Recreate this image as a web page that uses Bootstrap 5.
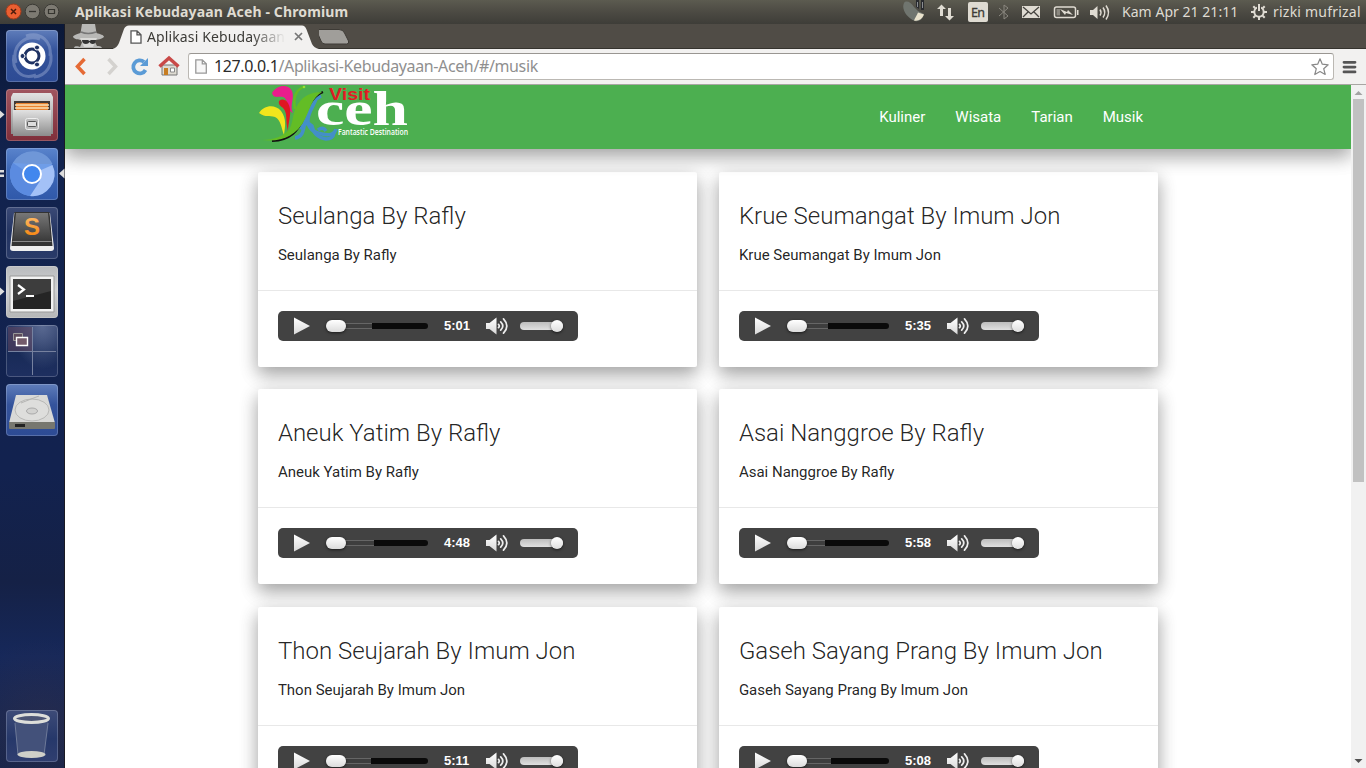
<!DOCTYPE html>
<html lang="id">
<head>
<meta charset="utf-8">
<meta name="viewport" content="width=device-width, initial-scale=1">
<title>Aplikasi Kebudayaan Aceh</title>
<link href="https://cdn.jsdelivr.net/npm/bootstrap@5.3.0/dist/css/bootstrap.min.css" rel="stylesheet">
<style>
  body { height: 100vh; overflow: hidden; font-family: Roboto, "Noto Sans", sans-serif; font-size: 15px; color: rgba(0,0,0,.87); }
  svg { display: block; flex: none; }
  .ui-font { font-family: "Noto Sans", "Open Sans", sans-serif; white-space: nowrap; }

  /* desktop panel */
  .panel { height: 24px; background: linear-gradient(#5c5b50, #4c4a43 50%, #3e3d38); color: #dfdbd2; font-size: 14px; line-height: 24px; }
  .win-title { font-weight: 700; margin-left: 15px; letter-spacing: .13px; }
  .clock { width: 129px; letter-spacing: .04px; }
  .user-name { width: 93px; margin-left: 6px; letter-spacing: .22px; }

  /* launcher */
  .launcher { width: 65px; padding: 6px 0 6px 6px; gap: 7px; background: radial-gradient(circle at 42px 705px, rgba(90,60,60,.25), transparent 90px), linear-gradient(#0b1838, #12234e 18%, #12224f 60%, #152146 75%, #16285a 85%, #14244c); border-right: 1px solid #1a1a24; }
  .tile { width: 52px; height: 52px; border-radius: 4px; box-shadow: inset 0 0 0 1px rgba(255,255,255,.2); flex: none; background: linear-gradient(#5f7dba, #34539b 40%, #2d4b94); }
  .tile-files { background: linear-gradient(#a0555f, #7f2e3a); }
  .tile-chrome { background: linear-gradient(#5a84cc, #3e69b8 40%, #3059aa); }
  .tile-sublime { background: linear-gradient(#3b4a76, #233462 50%, #2a3b69); }
  .tile-term { background: linear-gradient(#b8babd, #d0d1d2 45%, #b5b6b7); }
  .tile-work { background: radial-gradient(ellipse at 70% 0, #5a6a92, transparent 60%), linear-gradient(#2a3a68, #182a57 50%, #1e2f60); }
  .tile-trash { background: linear-gradient(#3d4b78, #26386a 55%, #303f70); }
  .pip { left: 0; top: 21px; }
  .pip-right { left: 59px; top: 20px; }
  .tile-wrap { margin-left: -6px; padding-left: 6px; width: 65px; }

  /* browser */
  .tabstrip { height: 25px; background: #504c46; border-bottom: 1px solid #35332e; }
  .tab { width: 206px; height: 25px; margin-left: 4px; padding-left: 17px; z-index: 1; }
  .tab-shape { left: 0; top: 1px; z-index: -1; }
  .tab-label { width: 140px; margin-left: 5px; font-size: 14px; letter-spacing: .12px; color: #3c3b37; line-height: 25px; -webkit-mask-image: linear-gradient(90deg, #000 75%, transparent 99%); mask-image: linear-gradient(90deg, #000 75%, transparent 99%); }
  .toolbar { height: 36px; background: #f2f1f0; border-bottom: 1px solid #a8a6a3; }
  .url-box { height: 27px; border: 1px solid #bbb8b3; border-top-color: #999692; border-radius: 3px; background: #fff; margin-left: 7px; padding-left: 6px; font-size: 16px; color: #8f8f8f; line-height: 25px; }
  .url-box b { font-weight: 400; color: #2b2b2b; }
  .url-text { letter-spacing: -.37px; margin-left: -1px; }

  /* page */
  .lift { box-shadow: 0 8px 17px 0 rgba(0,0,0,.22), 0 6px 20px 0 rgba(0,0,0,.19); }
  .site-nav { height: 64px; background: #4caf50; padding: 0; z-index: 1; }
  .page-wrap { width: 70%; margin: 0 auto; }
  .site-nav .nav-link { padding: 0 15px; line-height: 64px; color: #fff; }
  .song-grid { display: grid; grid-template-columns: 439px 439px; column-gap: 22px; row-gap: 22.4px; padding-top: 22.9px; }
  .song { height: 195px; background: #fff; border-radius: 2px; }
  .song-head { height: 118px; padding: 20px 20px 0; }
  .song-title { font-size: 24px; font-weight: 300; line-height: 48px; margin-bottom: 4px; }
  .song-foot { border-top: 1px solid #e8e8e8; padding: 20px; }
  .player { width: 300px; height: 30px; border-radius: 5px; background: #424242; padding-left: 15px; }
  .seek { width: 102px; height: 6px; border-radius: 3px; background: #0a0a0a; margin-left: 15px; }
  .seek-buffer { height: 6px; border-radius: 3px 0 0 3px; background: linear-gradient(#666 0 1px, #3e3e3e 1px 5px, #666 5px); }
  .seek-knob { left: 0; top: -3px; width: 20px; height: 12px; border-radius: 6px; background: linear-gradient(#fff, #dcdcdc); box-shadow: 0 1px 3px rgba(0,0,0,.6); }
  .play-time { width: 42px; padding-left: 16px; font: 700 13px/30px "Liberation Sans", sans-serif; color: #fff; }
  .volume { width: 43px; height: 8px; border-radius: 4px; background: linear-gradient(#bdbdbd, #e0e0e0); margin-left: 11px; }
  .volume-knob { right: 0; top: -2px; width: 12px; height: 12px; border-radius: 50%; background: linear-gradient(#fff, #dedede); box-shadow: 0 1px 3px rgba(0,0,0,.6); }
  .scroll-col { width: 15px; background: #f1f1f1; z-index: 2; }
  .scroll-thumb { width: 11px; height: 383px; margin: 14px auto 0 2px; background: #c1c1c1; }
</style>
</head>
<body class="d-flex flex-column">

<svg width="0" height="0" class="position-absolute">
  <defs>
    <linearGradient id="white-fade" x1="0" y1="0" x2="0" y2="1"><stop stop-color="#fff"/><stop offset="1" stop-color="#d8d8d8"/></linearGradient>
    <linearGradient id="steel" x1="0" y1="0" x2="0" y2="1"><stop stop-color="#e2e2e2"/><stop offset="1" stop-color="#8c8c8c"/></linearGradient>
    <linearGradient id="dark-key" x1="0" y1="0" x2="0" y2="1"><stop stop-color="#777"/><stop offset="1" stop-color="#3a3a3a"/></linearGradient>
    <linearGradient id="ember" x1="0" y1="0" x2="0" y2="1"><stop stop-color="#ffc477"/><stop offset="1" stop-color="#f57c00"/></linearGradient>
    <symbol id="ic-play" viewBox="0 0 18 20"><path d="M1 1.500 17 10 1 18.500Z" fill="url(#white-fade)"/></symbol>
    <symbol id="ic-sound" viewBox="0 0 23 18"><path d="M0 6h3.500L10.500 .5v17L3.500 12H0Z" fill="url(#white-fade)"/><path d="M12.500 7.300q1.600 1.700 0 3.400M14.700 4.800q4.200 4.200 0 8.400M17.500 1.800q6.700 7.200 0 14.400" fill="none" stroke="#eee" stroke-width="1.700" stroke-linecap="round"/></symbol>
  </defs>
</svg>

<header class="panel ui-font d-flex align-items-center flex-shrink-0">
  <svg width="60" height="24" viewBox="0 0 60 24">
    <circle cx="13.500" cy="11.500" r="7.500" fill="#ea5f31" stroke="#a63c1b"/><path d="m11 9 5 5m0-5-5 5" stroke="#4c1c0c" stroke-width="1.500"/>
    <circle cx="32.500" cy="11.500" r="7.300" fill="#7d7a72" stroke="#3b3a35"/><path d="M29 11.500h7" stroke="#35342f" stroke-width="1.300"/>
    <circle cx="51.500" cy="11.500" r="7.300" fill="#7d7a72" stroke="#3b3a35"/><path d="M48.500 9.500h6v4h-6z" fill="none" stroke="#35342f" stroke-width="1.200"/>
  </svg>
  <span class="win-title">Aplikasi Kebudayaan Aceh - Chromium</span>
  <svg class="ms-auto" width="219" height="24" viewBox="0 0 219 24">
    <path d="M1 3C3 0 8 2 11 7l4 4 6 3c-1 5-5 8-9 7C4 18-2 9 1 3Z" fill="#70756f"/><path d="M11 20.500c4 1 8-1 10-6l-6-2c-1 3-3 5-4 8Z" fill="#e9e2cc"/><path d="M13 0h3v9l-3-2ZM18 0h3v10h-3Z" fill="#292b2f"/><path d="M14.500 2v5M19.500 2v6" stroke="#8a8d92"/>
    <g fill="#dfdbd2"><path d="M38.500 4.500 34 9h3v7h3V9h3ZM46.500 20.500 42 16h3V8h3v8h3Z"/><rect x="65" y="2" width="20" height="20" rx="2"/></g>
    <text x="68" y="17" font-size="12.500" fill="#3c3b37" stroke="#3c3b37" stroke-width=".3" textLength="14">En</text>
    <path d="m96 8 9 8-4 3V5l4 3-9 8" fill="none" stroke="#8b8880"/>
    <rect x="119" y="6" width="18" height="12" fill="#dfdbd2"/><path d="m120 7 8 7 8-7m-16 10 5-5m11 5-5-5" fill="none" stroke="#45433e" stroke-width="1.300"/>
    <rect x="151.500" y="7" width="21" height="10.500" rx="2" fill="none" stroke="#dfdbd2" stroke-width="1.500"/><path d="M174 10h1.500v5H174Z" fill="#dfdbd2"/><path d="M153.500 9H157v6.500h-3.500z" fill="#8b8880"/><path d="m157 9 7 3 1-2 5 5-7-2-1 2Z" fill="#dfdbd2"/>
    <path d="M187 10h3l4.500-4v13l-4.500-4h-3Z" fill="#dfdbd2"/><path d="M197 9.500q2 3 0 6M200 7.500q3.500 5 0 10M203 5.500q5 7 0 14" fill="none" stroke="#dfdbd2" stroke-width="1.500"/>
  </svg>
  <span class="clock ms-0">Kam Apr 21 21:11</span>
  <svg width="16" height="16" viewBox="0 0 16 16"><circle cx="8" cy="8" r="4.700" fill="none" stroke="#dfdbd2" stroke-width="2"/><path d="M8 0v7M8 13v3M0 8h3m10 0h3M2.300 2.300l2 2m7.400 7.400 2 2M2.300 13.700l2-2m7.400-7.400 2-2" stroke="#dfdbd2" stroke-width="2"/><path d="M6 1h1v6H6zM9 1h1v6H9z" fill="#4a4842"/></svg>
  <span class="user-name">rizki mufrizal</span>
</header>

<div class="d-flex flex-grow-1" style="min-height:0">
  <aside class="launcher d-flex flex-column flex-shrink-0">
    <svg class="tile" viewBox="0 0 52 52">
      <g fill="none" stroke="#a9badd" stroke-opacity=".4" stroke-width="3"><path d="M10 33C5 15 20 4 34 9M44 21c4 14-4 25-16 26M20 6c15-5 26 6 24 20M30 45C16 50 5 40 8 25"/></g>
      <circle cx="26" cy="26" r="13.500" fill="#fff"/><circle cx="26" cy="26" r="7" fill="none" stroke="#1f3263" stroke-width="3"/>
      <g fill="#1f3263" stroke="#fff" stroke-width="1"><circle cx="16.500" cy="26" r="2.500"/><circle cx="31" cy="17.500" r="2.500"/><circle cx="31" cy="34.500" r="2.500"/></g>
    </svg>
    <div class="tile-wrap position-relative">
      <svg class="pip position-absolute" width="5" height="9"><path d="M0 .5 4.500 4.500 0 8.500Z" fill="#ddd"/></svg>
      <svg class="tile tile-files" viewBox="0 0 52 52"><path d="M7 4h38l2 4v37H5V8Z" fill="url(#steel)"/><path d="M8 12h36v11H8z" fill="#433a35"/><path d="M10 14h32v8H10z" fill="#e8822f"/><path d="M9 16h34M9 19h34" stroke="#f9e2b8" stroke-width="1.300"/><path d="M7 21h38v26H7z" fill="url(#steel)"/><rect x="19.500" y="29.500" width="13" height="11" rx="2" fill="#bbb" stroke="#eee"/><rect x="21.500" y="32.500" width="9" height="5" rx="1" fill="#ddd" stroke="#555"/></svg>
    </div>
    <div class="tile-wrap position-relative">
      <svg class="pip position-absolute" width="5" height="9"><path d="M0 1h4v2.500H0zM0 5.500h4V8H0z" fill="#ddd"/></svg>
      <svg class="tile tile-chrome" viewBox="0 0 52 52"><circle cx="26" cy="26" r="22" fill="#6f9de8"/><path d="M26 26 46.500 17A22 22 0 0 1 24 48Z" fill="#a3c1f7"/><path d="M7 15A22 22 0 0 0 24 48l10-15Z" fill="#5b8be0"/><path d="M7 15A22 22 0 0 1 46.500 16H26Z" fill="#6f97d8"/><circle cx="26" cy="26" r="9" fill="#4287ee" stroke="#fff" stroke-width="2"/></svg>
      <svg class="pip-right position-absolute" width="6" height="11"><path d="M5.500 .5 0 5.500l5.500 5Z" fill="#ddd"/></svg>
    </div>
    <svg class="tile tile-sublime" viewBox="0 0 52 52"><path d="M8 6h36l4 35q0 3-3 3H7q-3 0-3-3Z" fill="#eee"/><path d="M8.500 5h35l3 34H5.500Z" fill="#333"/><path d="M10 6h32l3 28H7Z" fill="url(#dark-key)"/><path d="M6.500 34.500h39" stroke="#888"/><text x="26" y="28" text-anchor="middle" font-family="Liberation Sans, sans-serif" font-size="24" font-weight="700" fill="url(#ember)">S</text></svg>
    <div class="tile-wrap position-relative">
      <svg class="pip position-absolute" width="5" height="9"><path d="M0 .5 4.500 4.500 0 8.500Z" fill="#ddd"/></svg>
      <svg class="tile tile-term" viewBox="0 0 52 52"><path d="M4 10h44v36H4z" fill="#f2f2f2" stroke="#999"/><path d="M7 13h38v30H7z" fill="#252525"/><path d="M7 13h38v12L7 35Z" fill="#3d3d3d"/><path d="m12 19 6 4.500-6 4.500M20 30h8" fill="none" stroke="#fff" stroke-width="2.200"/></svg>
    </div>
    <svg class="tile tile-work" viewBox="0 0 52 52"><path d="M2 2h24v24H2z" fill="#63465e" opacity=".5"/><path d="M26.500 2v48M2 26.500h48" stroke="#76819f"/><path d="M7.500 8.500h9v7h-9z" fill="#5d4b5c" stroke="#999"/><path d="M10.500 12.500h11v8h-11z" fill="#735b6b" stroke="#fff" stroke-width="1.400"/></svg>
    <svg class="tile" viewBox="0 0 52 52"><path d="M10 11h31l8 28H3Z" fill="#d9d9d7"/><path d="M3 38h46v6q0 1-1 1H4q-1 0-1-1z" fill="#77776f"/><path d="M9 40h10v3H9z" fill="#222"/><ellipse cx="26" cy="26" rx="17" ry="11" fill="#dededc" stroke="#b8b8b6"/><ellipse cx="26" cy="27" rx="5.500" ry="3" fill="#d2d2d0" stroke="#aaa"/><path d="m15 19 10-4 8-3" fill="none" stroke="#b5b5b3"/></svg>
    <svg class="tile tile-trash mt-auto" viewBox="0 0 52 52"><path d="m9 12 3 33q13 5 26 0l4-33Z" fill="#43517a"/><path d="m9 13 3 32m26 0 4-32" stroke="#6e7a99"/><ellipse cx="25.500" cy="44.500" rx="14" ry="3.500" fill="#cfd0c9"/><ellipse cx="25.500" cy="8.500" rx="17" ry="4" fill="#4c5575" stroke="#dddeda" stroke-width="3"/></svg>
  </aside>

  <div class="d-flex flex-column flex-grow-1" style="min-width:0">
    <div class="tabstrip d-flex flex-shrink-0 ui-font">
      <svg class="ms-1" width="40" height="24" viewBox="0 0 40 24"><path d="m13 0-1.500 9C7 10 4 12 4 13c2 3 8 3 10 3l-3 7c-1 0-5-2-6 1h28c-1-2-3-2-5-2l-3-6c4 0 8-1 10-3 0-2-4-3-7.500-4L26 0Z" fill="#b8b8b6"/><path d="M12 8q7 3 15 0" fill="none" stroke="#777" stroke-width="1.500"/><path d="M11 14h17l-4 9h-9Z" fill="#d8d8d6"/><path d="M13 16h6l1.500 1L22 16h5q0 4-3.500 4-2 0-3-2-1 2-3.500 2-4 0-4-4Z" fill="#343434"/></svg>
      <div class="tab position-relative d-flex align-items-center">
        <svg class="tab-shape position-absolute" width="206" height="25" viewBox="0 0 206 25"><path d="M-1 24Q4 23 6 18L11 4Q12.500 .5 16 .5H189q3 0 4.500 4L199 19q2 4 7 5v1H0Z" fill="#f2f1f0"/></svg>
        <svg width="12" height="14" viewBox="0 0 12 14"><path d="M1 .8h6l4 4v8.400H1ZM7 .8v4h4" fill="#fff" stroke="#555" stroke-width="1.300"/></svg>
        <span class="tab-label overflow-hidden">Aplikasi Kebudayaan</span>
        <svg width="9" height="9" viewBox="0 0 9 9" style="margin-left:7px"><path d="m1 1 7 7m0-7L1 8" stroke="#777" stroke-width="1.700"/></svg>
      </div>
      <svg class="flex-shrink-0" width="34" height="24" viewBox="0 0 34 24"><path d="M-3 5.500h23q4 0 5.500 3.500l4 8q1 3-2 3H6q-3 0-4-3Z" fill="#a09e9a" stroke="#3e3b36"/></svg>
    </div>
    <div class="toolbar d-flex align-items-center flex-shrink-0 ui-font">
      <svg width="116" height="34" viewBox="0 0 116 34">
        <path d="m19.500 9-7 7.500 7 7.500" fill="none" stroke="#e56a35" stroke-width="3.500"/>
        <path d="m43.500 9 7 7.500-7 7.500" fill="none" stroke="#d4d2cf" stroke-width="3.500"/>
        <path d="M79 12a6.500 6.500 0 1 0 1.500 8" fill="none" stroke="#5b9bd6" stroke-width="3.800"/><path d="M83 8v8h-8Z" fill="#5b9bd6"/>
        <path d="M97 15h15v10H97z" fill="#dedbd2" stroke="#777"/><path d="M99 18h4v7h-4z" fill="#c77d22"/><path d="M105.500 18h4v4h-4z" fill="#fff" stroke="#888"/><path d="m94.500 16.500 9.500-8.500 9.500 8.500" fill="none" stroke="#c94a48" stroke-width="3.500"/>
      </svg>
      <div class="url-box d-flex align-items-center flex-grow-1">
        <svg class="me-2" width="12" height="15" viewBox="0 0 12 15"><path d="M.8.800h6.500l4 4v9.400H.8ZM7.300.8v4h4" fill="#f7f7f7" stroke="#999" stroke-width="1.300"/></svg>
        <span class="url-text"><b>127.0.0.1</b>/Aplikasi-Kebudayaan-Aceh/#/musik</span>
        <svg class="ms-auto me-1" width="18" height="18" viewBox="0 0 18 18"><path d="m9 .8 2.300 5.400 5.900.6-4.500 3.900 1.500 5.800L9 13.500l-5.200 3 1.500-5.800L.8 6.800l5.900-.6Z" fill="#fff" stroke="#888" stroke-width="1.200" stroke-linejoin="round"/></svg>
      </div>
      <svg class="ms-2" width="24" height="14" viewBox="0 0 24 14"><path d="M2 2.300h11M2 7.100h11M2 11.900h11" stroke="#555" stroke-width="2.800" stroke-linecap="round"/></svg>
    </div>

    <div class="d-flex flex-grow-1 overflow-hidden">
      <main class="flex-grow-1 overflow-hidden bg-white">
        <nav class="site-nav lift position-relative">
          <div class="page-wrap d-flex justify-content-between">
            <svg width="152" height="60" viewBox="0 0 152 60" role="img" aria-label="Visit Aceh">
              <path d="M37 53C47 52 45 41 48 33 52 24 54 15 63 11M58 14c-3 9-9 14-8 23 1 8 8 11 14 12 8 2 13 0 14-5" fill="none" stroke="#438fc8" stroke-width="3.500"/>
              <path d="M42 44q6-9 12-3 2 11 14 13 7 0 8-6M60 45q5-4 8 1" fill="none" stroke="#438fc8" stroke-width="3.500"/>
              <path d="M14 8C19-1 31-1 34 6c3 8-3 14 1 22-8-4-4-14-10-16-6-1-9 2-11-4Z" fill="#e91e8c"/>
              <path d="M21 16c5-4 10 1 11 8 1 8-2 14-2 22-3-11 0-18-5-23-2-2-5-3-4-7Z" fill="#df1722"/>
              <path d="M1 28c5-8 16-9 22-2 6 8 4 16 3 24-3-8-3-15-9-18-6-2-9 1-16-4Z" fill="#f2e51c"/>
              <path d="M14 56c19-1 26-10 32-24C51 20 55 11 65 7" fill="none" stroke="#111" stroke-width="2.200"/>
              <path d="M4 55c12 0 23-4 28-12C36 34 34 28 40 19 45 11 53 7 64 7 54 13 52 24 47 34 38 52 23 57 4 55Z" fill="#63bd25"/>
              <path d="M45 2c-8 4-10 12-8 22" fill="none" stroke="#63bd25" stroke-width="2.500"/><circle cx="46" cy="2" r="1.300" fill="#9adf36"/>
              <text x="71" y="14.500" font-family="Liberation Sans, sans-serif" font-size="17" font-weight="700" fill="#e01b24" textLength="41" lengthAdjust="spacingAndGlyphs">Visit</text>
              <text x="58" y="39.500" font-family="Liberation Serif, serif" font-size="49" font-weight="700" fill="#fff" textLength="92" lengthAdjust="spacingAndGlyphs">ceh</text>
              <text x="80" y="49.500" font-family="Open Sans, sans-serif" font-size="8" font-weight="600" fill="#fff" textLength="70" lengthAdjust="spacingAndGlyphs">Fantastic Destination</text>
            </svg>
            <div class="nav">
              <a class="nav-link" href="#/kuliner">Kuliner</a>
              <a class="nav-link" href="#/wisata">Wisata</a>
              <a class="nav-link" href="#/tarian">Tarian</a>
              <a class="nav-link" href="#/musik">Musik</a>
            </div>
          </div>
        </nav>
        <div class="page-wrap song-grid">
          <article class="song lift"><div class="song-head"><div class="song-title">Seulanga By Rafly</div><p class="m-0">Seulanga By Rafly</p></div>
            <div class="song-foot"><div class="player d-flex align-items-center"><svg width="18" height="20"><use href="#ic-play"/></svg><div class="seek position-relative"><div class="seek-buffer" style="width:46px"></div><span class="seek-knob position-absolute"></span></div><span class="play-time">5:01</span><svg class="ms-3" width="23" height="18"><use href="#ic-sound"/></svg><div class="volume position-relative"><span class="volume-knob position-absolute"></span></div></div></div></article>
          <article class="song lift"><div class="song-head"><div class="song-title">Krue Seumangat By Imum Jon</div><p class="m-0">Krue Seumangat By Imum Jon</p></div>
            <div class="song-foot"><div class="player d-flex align-items-center"><svg width="18" height="20"><use href="#ic-play"/></svg><div class="seek position-relative"><div class="seek-buffer" style="width:41px"></div><span class="seek-knob position-absolute"></span></div><span class="play-time">5:35</span><svg class="ms-3" width="23" height="18"><use href="#ic-sound"/></svg><div class="volume position-relative"><span class="volume-knob position-absolute"></span></div></div></div></article>
          <article class="song lift"><div class="song-head"><div class="song-title">Aneuk Yatim By Rafly</div><p class="m-0">Aneuk Yatim By Rafly</p></div>
            <div class="song-foot"><div class="player d-flex align-items-center"><svg width="18" height="20"><use href="#ic-play"/></svg><div class="seek position-relative"><div class="seek-buffer" style="width:48px"></div><span class="seek-knob position-absolute"></span></div><span class="play-time">4:48</span><svg class="ms-3" width="23" height="18"><use href="#ic-sound"/></svg><div class="volume position-relative"><span class="volume-knob position-absolute"></span></div></div></div></article>
          <article class="song lift"><div class="song-head"><div class="song-title">Asai Nanggroe By Rafly</div><p class="m-0">Asai Nanggroe By Rafly</p></div>
            <div class="song-foot"><div class="player d-flex align-items-center"><svg width="18" height="20"><use href="#ic-play"/></svg><div class="seek position-relative"><div class="seek-buffer" style="width:38px"></div><span class="seek-knob position-absolute"></span></div><span class="play-time">5:58</span><svg class="ms-3" width="23" height="18"><use href="#ic-sound"/></svg><div class="volume position-relative"><span class="volume-knob position-absolute"></span></div></div></div></article>
          <article class="song lift"><div class="song-head"><div class="song-title">Thon Seujarah By Imum Jon</div><p class="m-0">Thon Seujarah By Imum Jon</p></div>
            <div class="song-foot"><div class="player d-flex align-items-center"><svg width="18" height="20"><use href="#ic-play"/></svg><div class="seek position-relative"><div class="seek-buffer" style="width:45px"></div><span class="seek-knob position-absolute"></span></div><span class="play-time">5:11</span><svg class="ms-3" width="23" height="18"><use href="#ic-sound"/></svg><div class="volume position-relative"><span class="volume-knob position-absolute"></span></div></div></div></article>
          <article class="song lift"><div class="song-head"><div class="song-title">Gaseh Sayang Prang By Imum Jon</div><p class="m-0">Gaseh Sayang Prang By Imum Jon</p></div>
            <div class="song-foot"><div class="player d-flex align-items-center"><svg width="18" height="20"><use href="#ic-play"/></svg><div class="seek position-relative"><div class="seek-buffer" style="width:44px"></div><span class="seek-knob position-absolute"></span></div><span class="play-time">5:08</span><svg class="ms-3" width="23" height="18"><use href="#ic-sound"/></svg><div class="volume position-relative"><span class="volume-knob position-absolute"></span></div></div></div></article>
        </div>
      </main>
      <div class="scroll-col position-relative d-flex flex-column flex-shrink-0">
        <svg class="position-absolute" width="15" height="14"><path d="M3.500 10 7.500 6l4 4Z" fill="#a3a3a3"/></svg>
        <div class="scroll-thumb"></div>
        <svg class="mt-auto" width="15" height="14"><path d="M3.500 5 7.500 9l4-4Z" fill="#505050"/></svg>
      </div>
    </div>
  </div>
</div>
<script src="https://cdn.jsdelivr.net/npm/bootstrap@5.3.0/dist/js/bootstrap.bundle.min.js"></script>
</body>
</html>
